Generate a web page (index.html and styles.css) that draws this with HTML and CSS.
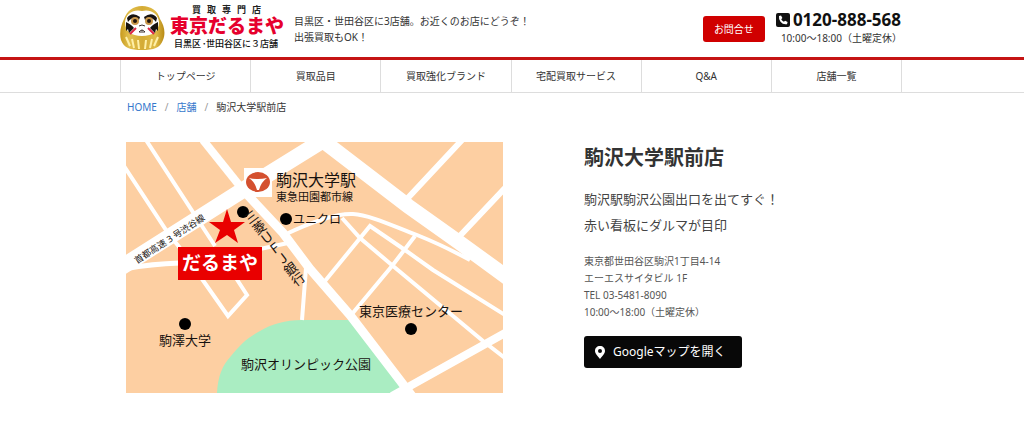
FILE: index.html
```html
<!DOCTYPE html>
<html lang="ja">
<head>
<meta charset="utf-8">
<meta name="viewport" content="width=device-width, initial-scale=1">
<title>駒沢大学駅前店 | 東京だるまや</title>
<link rel="stylesheet" href="styles.css">
</head>
<body>
<header class="site-header">
  <div class="container header-row">
    <a class="logo" href="#" aria-label="東京だるまや">
      <svg width="168" height="50" viewBox="0 -2 168 50">
        <defs>
          <linearGradient id="gold" x1="0" x2="1">
            <stop offset="0" stop-color="#c79a1e"/><stop offset=".2" stop-color="#e2c04e"/><stop offset=".5" stop-color="#d4ab35"/><stop offset=".8" stop-color="#e0bc48"/><stop offset="1" stop-color="#b88a14"/>
          </linearGradient>
        </defs>
        <path d="M22 0C31 0 38 5 40 13C44 19 46 27 43 34C40 42 34 44 22 44C10 44 4 42 1 34C-1 27 1 19 4 13C7 5 13 0 22 0Z" fill="url(#gold)"/>
        <path d="M22 5C30 3 38 7 39 16C39 25 33 30 22 30C11 30 5 25 5 16C6 7 14 3 22 5Z" fill="#fff"/>
        <path d="M7 12Q12 5 20 11L19 14Q13 9 8 16ZM37 12Q32 5 24 11L25 14Q31 9 36 16Z" fill="#171310"/>
        <circle cx="15" cy="15" r="4" fill="#c9974a"/><circle cx="29" cy="15" r="4" fill="#c9974a"/>
        <circle cx="15" cy="15" r="2" fill="#20150d"/><circle cx="29" cy="15" r="2" fill="#20150d"/>
        <path d="M6 16Q12 19 14 22L9 27L8 23L6 25ZM38 16Q32 19 30 22L35 27L36 23L38 25Z" fill="#171310"/>
        <path d="M10 28L16 22M34 28L28 22" stroke="#dc2545" stroke-width="2"/>
        <path d="M19 20Q22 18 25 20M19 26Q22 22 25 26M20 25V27M22 24V27M24 25V27" fill="none" stroke="#3b2f2d"/>
        <path d="M6 31L10 40M12 33L14 42M18 34L19 43M26 34L25 43M32 33L30 42M38 31L34 40" stroke="#fff0a8" stroke-width="2"/>
        <text class="logo-top" x="72 87 102 117 132" y="7">買取専門店</text>
        <text class="logo-name" x="50" y="27">東京だるまや</text>
        <text class="logo-sub" x="54" y="41">目黒区<tspan x="82">･</tspan><tspan x="86">世田谷区に３店舗</tspan></text>
      </svg>
    </a>
    <p class="lead">目黒区・世田谷区に3店舗。お近くのお店にどうぞ！<br>出張買取もOK！</p>
    <a class="contact" href="#">お問合せ</a>
    <div class="phone">
      <a class="phone-number" href="tel:0120888568">
        <svg width="14" height="14" viewBox="0 0 14 14" aria-hidden="true"><rect width="14" height="14" rx="2" fill="#111"/><path d="M3 3L5 2.4L6.4 5L5.2 6.2Q6.2 8 7.9 8.8L9.1 7.7L11.6 9L11 11.2Q7 12 4.5 8.8Q2.500 6.500 3 3Z" fill="#fff"/></svg>
        <span>0120-888-568</span>
      </a>
      <span class="phone-hours">10:00〜18:00（土曜定休）</span>
    </div>
  </div>
</header>
<nav class="global-nav">
  <div class="container">
    <ul class="nav-list">
      <li><a href="#">トップページ</a></li>
      <li><a href="#">買取品目</a></li>
      <li><a href="#">買取強化ブランド</a></li>
      <li><a href="#">宅配買取サービス</a></li>
      <li><a href="#">Q&amp;A</a></li>
      <li><a href="#">店舗一覧</a></li>
    </ul>
  </div>
</nav>
<div class="container">
  <ol class="breadcrumb">
    <li><a href="#">HOME</a></li>
    <li><a href="#">店舗</a></li>
    <li>駒沢大学駅前店</li>
  </ol>
  <main class="shop">
    <svg class="map" viewBox="126 142 377 251" role="img" aria-label="駒沢大学駅前店の地図">
      <rect x="126" y="142" width="377" height="251" fill="#fdcfa2"/>
      <path d="M217 393C218 376 222 366 231 356C240 345 247 338 260 331C272 324 285 320 302 320H350L410 393Z" fill="#aaedc2"/>
      <g fill="none" stroke="#fff" stroke-width="4">
        <path d="M146 140L215 246M124 166L168 233L180 248"/>
        <path d="M124 269Q150 264 180 263" stroke-width="5"/>
        <path d="M202 279L228 316L247 295L236 278M260 249L288 243M306 268L302 320"/>
        <path d="M284 235Q330 213 353 214C370 215 393 226 417 235Q442 245 470 260"/>
        <path d="M342 218L360 238L393 266L483 341L505 358"/>
        <path d="M325 281L370 226L405 250L433 270L505 315M415 236L392 266L352 314"/>
        <path d="M462 140L406 200M505 188L456 240" stroke-width="6"/>
        <path d="M505 333L410 386L392 396" stroke-width="8"/>
        <path d="M203 140L243 190" stroke-width="8"/>
        <path d="M243 190L283 233L310 269L350 315L412 396" stroke-width="9"/>
        <path d="M120 268L243 190L322 141" stroke-width="16"/>
        <path d="M318 137L408 206L460 243L508 278" stroke-width="15"/>
      </g>
      <rect x="244" y="168" width="28" height="29" fill="#fff"/>
      <ellipse cx="258" cy="182" rx="12" ry="10" fill="#d4502f"/>
      <path d="M249 178Q258 180 267 178Q261 182 259 190H257Q255 182 249 178Z" fill="#fff"/>
      <path d="M227 209L231 222H245L234 230L238 243L227 235L215 243L220 230L209 222H223Z" fill="#e90000"/>
      <circle cx="243" cy="212" r="6"/><circle cx="286" cy="219" r="6"/><circle cx="185" cy="324" r="6"/><circle cx="411" cy="329" r="6"/>
      <rect x="178" y="247" width="84" height="33" fill="#e90000"/>
      <text class="map-brand" x="220" y="270">だるまや</text>
      <text class="map-station" x="276" y="186">駒沢大学駅</text>
      <text class="map-small" x="276" y="201">東急田園都市線</text>
      <text class="map-label map-store" x="317" y="224">ユニクロ</text>
      <text class="map-label" x="185" y="345">駒澤大学</text>
      <text class="map-label" x="411" y="316">東京医療センター</text>
      <text class="map-label" x="306" y="369">駒沢オリンピック公園</text>
      <text class="map-road" transform="translate(137 264) rotate(-33)">首都高速 3 号渋谷線</text>
      <text class="map-bank" transform="translate(247 212) rotate(-37)">三菱ＵＦＪ銀行</text>
    </svg>
    <section class="details">
      <h1>駒沢大学駅前店</h1>
      <p class="intro">駒沢駅駒沢公園出口を出てすぐ！<br>赤い看板にダルマが目印</p>
      <address>東京都世田谷区駒沢1丁目4-14<br>エーエスサイタビル 1F<br>TEL 03-5481-8090<br>10:00〜18:00（土曜定休）</address>
      <a class="map-button" href="#">
        <svg width="10" height="13" viewBox="0 0 10 13" aria-hidden="true"><path fill-rule="evenodd" d="M5 0C8 0 10 2 10 5C10 8 7 10 5 13C3 10 0 8 0 5C0 2 2 0 5 0ZM5 3A2 2 0 1 0 5 7A2 2 0 1 0 5 3Z" fill="#fff"/></svg>
        Googleマップを開く
      </a>
    </section>
  </main>
</div>
</body>
</html>
```

FILE: styles.css
```css
* { box-sizing: border-box; }
body {
  margin: 0;
  background: #fff;
  color: #333;
  font-family: "Noto Sans", "Noto Sans CJK JP", sans-serif;
  font-size: 10px;
}
a { color: inherit; text-decoration: none; }
p, h1, ul, ol { margin: 0; padding: 0; }
ul, ol { list-style: none; }
svg { display: block; }
.container { max-width: 784px; margin: 0 auto; padding-right: 2px; }

.site-header { border-bottom: 3px solid #c51414; }
.header-row { display: flex; align-items: center; min-height: 57px; }
.logo { flex: none; }
.logo-top { font-size: 9px; font-weight: 700; fill: #222; }
.logo-name { font-size: 19px; font-weight: 900; fill: #e6002d; }
.logo-sub { font-size: 9px; font-weight: 500; fill: #111; }
.lead { margin-left: 6px; line-height: 16px; }
.contact {
  margin-left: auto;
  padding: 4px 11px;
  border-radius: 3px;
  background: #d00000;
  color: #fff;
  line-height: 18px;
}
.phone { margin-left: 11px; }
.phone-number { display: flex; align-items: center; gap: 3px; color: #111; font-size: 17px; font-weight: 700; line-height: 18px; }
.phone-hours { display: block; padding-left: 5px; line-height: 18px; }

.global-nav { border-bottom: 1px solid #ddd; }
.nav-list { display: grid; grid-template-columns: repeat(6, 1fr); border-right: 1px solid #ddd; }
.nav-list a { display: block; border-left: 1px solid #ddd; line-height: 32px; text-align: center; }

.breadcrumb { display: flex; padding-left: 7px; line-height: 29px; }
.breadcrumb li + li::before { content: "/"; padding: 0 8px; color: #999; }
.breadcrumb a { color: #3478cc; }

.shop { display: grid; grid-template-columns: 377fr 318fr; gap: 81px; padding: 20px 0 28px 6px; }
.map { width: 100%; height: auto; }
.map text { fill: #17120f; }
.map .map-brand { font-size: 19px; font-weight: 700; fill: #fff; text-anchor: middle; }
.map-station { font-size: 16px; }
.map-small { font-size: 11px; }
.map-label { font-size: 13px; text-anchor: middle; }
.map-store { font-size: 12px; }
.map-road { font-size: 9px; }
.map-bank { font-size: 13px; writing-mode: vertical-rl; }

.details h1 { font-size: 20px; line-height: 32px; }
.intro { margin-top: 12px; font-size: 13px; line-height: 26px; color: #444; }
.details address { margin-top: 15px; font-style: normal; line-height: 17px; color: #555; }
.map-button {
  display: inline-flex;
  align-items: center;
  gap: 8px;
  margin-top: 15px;
  padding: 0 16px 0 11px;
  border-radius: 3px;
  background: #080808;
  color: #fff;
  font-size: 12px;
  line-height: 32px;
}
```
